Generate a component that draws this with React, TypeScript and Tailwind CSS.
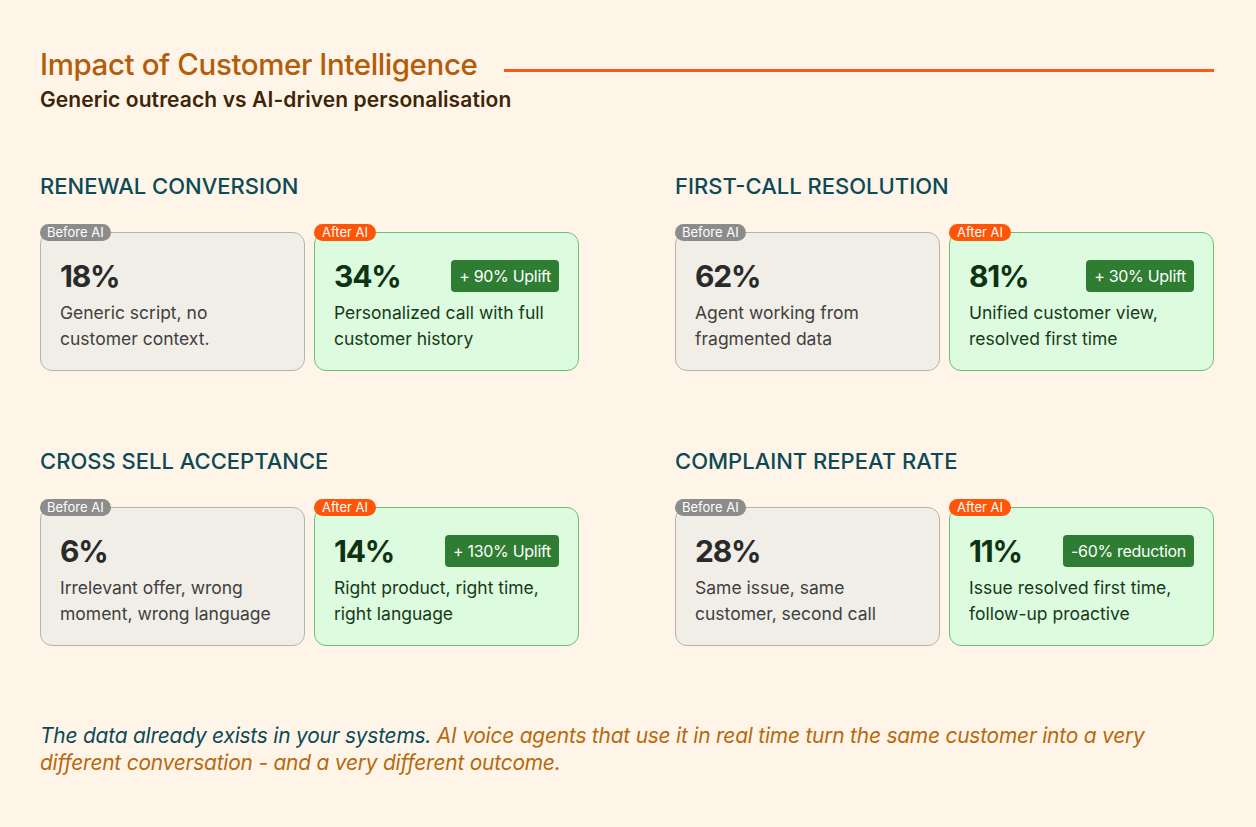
import React from "react";

type Metric = {
  title: string;
  before: { pct: string; text: string[] };
  after: { pct: string; text: string[]; badge: string };
};

const metrics: Metric[] = [
  {
    title: "RENEWAL CONVERSION",
    before: { pct: "18%", text: ["Generic script, no", "customer context."] },
    after: { pct: "34%", text: ["Personalized call with full", "customer history"], badge: "+ 90% Uplift" },
  },
  {
    title: "FIRST-CALL RESOLUTION",
    before: { pct: "62%", text: ["Agent working from", "fragmented data"] },
    after: { pct: "81%", text: ["Unified customer view,", "resolved first time"], badge: "+ 30% Uplift" },
  },
  {
    title: "CROSS SELL ACCEPTANCE",
    before: { pct: "6%", text: ["Irrelevant offer, wrong", "moment, wrong language"] },
    after: { pct: "14%", text: ["Right product, right time,", "right language"], badge: "+ 130% Uplift" },
  },
  {
    title: "COMPLAINT REPEAT RATE",
    before: { pct: "28%", text: ["Same issue, same", "customer, second call"] },
    after: { pct: "11%", text: ["Issue resolved first time,", "follow-up proactive"], badge: "-60% reduction" },
  },
];

function Section({ m }: { m: Metric }) {
  return (
    <div className="flex flex-col">
      <h2 className="text-[22px] leading-[28px] font-medium text-[#0b4a56] tracking-[0px]">{m.title}</h2>
      <div className="mt-[32px] grid grid-cols-2 gap-[9px]">
        <div className="relative h-[139px] rounded-[12px] border border-[#b5b3b0] bg-[#f1eee8] px-[19px] pt-[27px]">
          <span className="absolute -top-[9px] -left-px h-[17px] rounded-[9px] bg-[#8c8c8c] px-[7px] text-[13px] leading-[17px] text-white">
            Before AI
          </span>
          <div className="flex h-[32px] items-center">
            <span className="text-[30px] font-bold tracking-[-1.2px] text-[#2a2a2a]">{m.before.pct}</span>
          </div>
          <p className="mt-[8px] text-[17.5px] leading-[26px] text-[#404040]">
            {m.before.text[0]}
            <br />
            {m.before.text[1]}
          </p>
        </div>
        <div className="relative h-[139px] rounded-[12px] border border-[#6fbf73] bg-[#ddfbdf] pl-[19px] pr-[19px] pt-[27px]">
          <span className="absolute -top-[9px] -left-px h-[17px] rounded-[9px] bg-[#ff5508] px-[8px] text-[13px] leading-[17px] text-white">
            After AI
          </span>
          <div className="flex h-[32px] items-center justify-between">
            <span className="text-[30px] font-bold tracking-[-1.2px] text-[#0f3312]">{m.after.pct}</span>
            <span className="h-[32px] rounded-[4px] bg-[#2e7d32] px-[8px] text-[16px] leading-[32px] tracking-[-0.3px] text-white">
              {m.after.badge}
            </span>
          </div>
          <p className="mt-[8px] text-[17.5px] leading-[26px] text-[#163a18]">
            {m.after.text[0]}
            <br />
            {m.after.text[1]}
          </p>
        </div>
      </div>
    </div>
  );
}

export default function App() {
  return (
    <div
      className="h-[827px] w-[1256px] overflow-hidden bg-[#fef5e8] pl-[40px] pr-[42px] pt-[46px]"
      style={{ fontFamily: "Inter, 'Noto Sans', sans-serif" }}
    >
      <div className="flex items-center">
        <h1 className="text-[29.5px] leading-[36px] font-medium tracking-[-0.4px] text-[#b35d0c]">
          Impact of Customer Intelligence
        </h1>
        <div className="ml-[27px] mt-[12px] h-[3px] flex-1 bg-[#ff5a14]" />
      </div>
      <p className="mt-[4px] text-[21px] leading-[28px] font-semibold tracking-[0.1px] text-[#3f2508]">
        Generic outreach vs AI-driven personalisation
      </p>
      <div className="mt-[58px] grid grid-cols-2 gap-x-[96px] gap-y-[76px]">
        {metrics.map((m) => (
          <Section key={m.title} m={m} />
        ))}
      </div>
      <p className="mt-[76px] text-[20.9px] leading-[27px] italic tracking-[-0.2px] text-[#b8680e]">
        <span className="text-[#0b4a56]">The data already exists in your systems.</span> AI voice agents that use it in
        real time turn the same customer into a very
        <br />
        different conversation - and a very different outcome.
      </p>
    </div>
  );
}
